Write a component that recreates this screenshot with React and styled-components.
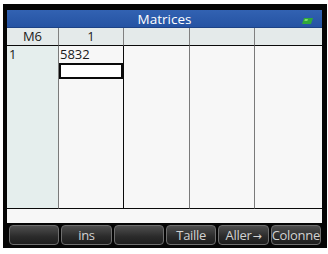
import React from "react";
import styled, { createGlobalStyle } from "styled-components";

const Global = createGlobalStyle`
  html, body { margin: 0; padding: 0; background: #ffffff; }
  body { font-family: "Open Sans", "DejaVu Sans", sans-serif; }
`;

const Page = styled.div`
  width: 328px;
  height: 254px;
  background: #ffffff;
  padding: 4px 0 0 3px;
  box-sizing: border-box;
`;

const Frame = styled.div`
  width: 324px;
  height: 244px;
  box-sizing: border-box;
  background: #050505;
  padding: 6px 5px 3px 4px;
  display: flex;
  flex-direction: column;
`;

const TitleBar = styled.div`
  position: relative;
  height: 18px;
  flex: none;
  background: linear-gradient(#3262b2, #2553a3);
  border-bottom: 1px solid #1c4286;
  box-sizing: border-box;
  display: flex;
  align-items: center;
  justify-content: center;
  color: #ffffff;
  font-size: 13.5px;
  line-height: 18px;
`;

const Battery = styled.svg`
  position: absolute;
  right: 9px;
  top: 8px;
`;

const Table = styled.div`
  flex: none;
  display: grid;
  grid-template-columns: 52px 65px 66px 65px 1fr;
  grid-template-rows: 18px 163px;
  background: #f7f7f7;
`;

const HeadCell = styled.div`
  background: #e4eaea;
  border-bottom: 1px solid #0a0a0a;
  border-right: ${(p) => (p.$last ? "none" : "1px solid #808080")};
  box-sizing: border-box;
  color: #1a1a1a;
  font-size: 13px;
  line-height: 17px;
  text-align: center;
`;

const BodyCol = styled.div`
  background: ${(p) => (p.$label ? "#e5eeed" : "#f7f7f7")};
  border-right: ${(p) =>
    p.$last ? "none" : p.$dark ? "1px solid #0a0a0a" : "1px solid #7a7a7a"};
  border-bottom: 1px solid #0a0a0a;
  box-sizing: border-box;
  display: flex;
  flex-direction: column;
  color: #1a1a1a;
  font-size: 13px;
  line-height: 17px;
`;

const RowLabel = styled.div`
  padding-left: 2px;
  height: 17px;
`;

const Value = styled.div`
  padding-left: 1px;
  height: 17px;
`;

const EditBox = styled.div`
  width: 64px;
  height: 16px;
  box-sizing: border-box;
  border: 2px solid #0a0a0a;
  background: #ffffff;
`;

const Strip = styled.div`
  flex: none;
  height: 14px;
  background: #f7f7f7;
`;

const SoftKeys = styled.div`
  flex: none;
  display: flex;
  gap: 2px;
  padding: 2px 1px 0 2px;
  height: 22px;
  box-sizing: border-box;
`;

const Key = styled.div`
  flex: 1;
  min-width: 0;
  height: 20px;
  box-sizing: border-box;
  border: 1px solid #6e6e6e;
  border-radius: 4px;
  background: linear-gradient(#4e4e4e, #2a2a2a 60%, #1e1e1e);
  color: #d2d2d2;
  font-size: 13px;
  letter-spacing: -0.3px;
  line-height: 18px;
  text-align: center;
  white-space: nowrap;
  overflow: hidden;
`;

const Arrow = styled.span`
  font-size: 11px;
  margin-left: 1px;
`;

export default function App() {
  const keys = ["", "ins", "", "Taille", "Aller", "Colonne"];
  return (
    <>
      <Global />
      <Page>
        <Frame>
          <TitleBar>
            Matrices
            <Battery width="11" height="6" viewBox="0 0 11 6">
              <path d="M2 0 H11 L9 6 H0 Z" fill="#2fa83a" />
              <path d="M3 1 H6 L5.3 3 H2.3 Z" fill="#7fdc6a" />
            </Battery>
          </TitleBar>
          <Table>
            <HeadCell>M6</HeadCell>
            <HeadCell>1</HeadCell>
            <HeadCell />
            <HeadCell />
            <HeadCell $last />
            <BodyCol $label>
              <RowLabel>1</RowLabel>
            </BodyCol>
            <BodyCol $dark>
              <Value>5832</Value>
              <EditBox />
            </BodyCol>
            <BodyCol />
            <BodyCol />
            <BodyCol $last />
          </Table>
          <Strip />
          <SoftKeys>
            {keys.map((k, i) => (
              <Key key={i}>
                {k}
                {k === "Aller" && <Arrow>→</Arrow>}
              </Key>
            ))}
          </SoftKeys>
        </Frame>
      </Page>
    </>
  );
}
